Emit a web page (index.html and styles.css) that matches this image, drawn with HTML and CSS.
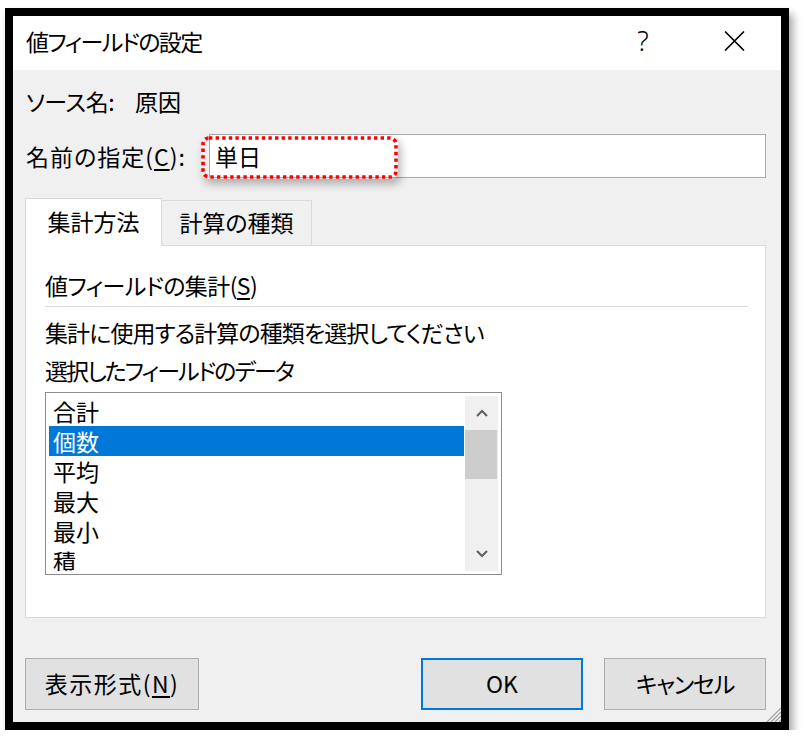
FILE: index.html
```html
<!DOCTYPE html>
<html lang="ja">
<head>
<meta charset="utf-8">
<title>値フィールドの設定</title>
<link rel="stylesheet" href="styles.css">
</head>
<body>
<div class="page">
  <div class="dialog">
    <div class="titlebar">
      <div class="title">値フィールドの設定</div>
      <div class="tb-help">?</div>
      <div class="tb-close">
        <svg width="21" height="20" viewBox="0 0 21 20"><path d="M1 0.5 L20 19.5 M20 0.5 L1 19.5" stroke="#000" stroke-width="1.6" fill="none"/></svg>
      </div>
    </div>
    <div class="body">
      <div class="row source">
        <span class="source-label">ソース名:</span>
        <span>原因</span>
      </div>
      <div class="row name">
        <span class="name-label">名前の指定(<u>C</u>):</span>
        <div class="input">
          <span>単日</span>
          <div class="annot">
            <svg width="197" height="43" viewBox="0 0 197 43"><rect x="2" y="2" width="193" height="39" rx="6" ry="6" fill="none" stroke="#ff0000" stroke-width="3.6" stroke-dasharray="3.4 3.2"/></svg>
          </div>
        </div>
      </div>
      <div class="tabs">
        <div class="tab active">集計方法</div>
        <div class="tab">計算の種類</div>
      </div>
      <div class="panel">
        <div class="heading">値フィールドの集計(<u>S</u>)</div>
        <div class="sep"></div>
        <div class="text t1">集計に使用する計算の種類を選択してください</div>
        <div class="text t2">選択したフィールドのデータ</div>
        <div class="listbox">
          <div class="items">
            <div class="item">合計</div>
            <div class="item selected">個数</div>
            <div class="item">平均</div>
            <div class="item">最大</div>
            <div class="item">最小</div>
            <div class="item">積</div>
          </div>
          <div class="scrollbar">
            <div class="sb-btn">
              <svg width="12" height="8" viewBox="0 0 12 8"><polyline points="1,7 6,2 11,7" fill="none" stroke="#606060" stroke-width="2"/></svg>
            </div>
            <div class="sb-thumb"></div>
            <div class="sb-track"></div>
            <div class="sb-btn">
              <svg width="12" height="8" viewBox="0 0 12 8"><polyline points="1,1 6,6 11,1" fill="none" stroke="#606060" stroke-width="2"/></svg>
            </div>
          </div>
        </div>
      </div>
      <div class="footer">
        <div class="btn btn-format">表示形式(<u>N</u>)</div>
        <div class="spacer"></div>
        <div class="btn btn-ok">OK</div>
        <div class="btn btn-cancel">キャンセル</div>
      </div>
    </div>
    <div class="grip">
      <svg width="16" height="16" viewBox="0 0 16 16"><path d="M16 2 L2 16 M16 6 L6 16 M16 10 L10 16 M16 14 L14 16" stroke="#a0a0a0" stroke-width="1.2" fill="none"/></svg>
    </div>
  </div>
</div>
</body>
</html>
```

FILE: styles.css
```css
* { box-sizing: border-box; }
html, body { margin: 0; padding: 0; background: #fff; }
body {
  font-family: "Noto Sans CJK JP", "Noto Sans", sans-serif;
  font-feature-settings: "palt";
  font-size: 23px;
  color: #000;
}
u { text-decoration-thickness: 2px; text-underline-offset: 3px; }
.page { padding: 8px 0 0 5px; }
.dialog {
  position: relative;
  width: 784px;
  height: 722px;
  border: 8px solid #000;
  box-shadow: 4px 6px 8px rgba(0,0,0,0.35);
  display: flex;
  flex-direction: column;
  background: #f0f0f0;
}
.titlebar {
  height: 54px;
  background: #fff;
  display: flex;
  align-items: center;
  padding-left: 13px;
}
.title { flex: 1; line-height: 1; padding-bottom: 4px; letter-spacing: -1.6px; }
.tb-help {
  width: 46px;
  margin-right: 22px;
  text-align: center;
  line-height: 1;
  padding-bottom: 6px;
  font-family: "Noto Sans", sans-serif;
  font-size: 27px;
  font-weight: 300;
}
.tb-close { width: 93px; display: flex; justify-content: center; padding-bottom: 5px; }
.tb-close svg { display: block; }
.body {
  flex: 1;
  display: flex;
  flex-direction: column;
  padding: 16px 15px 0 12px;
}
.row { display: flex; align-items: center; padding-left: 1px; }
.source { height: 30px; }
.source-label { width: 109px; letter-spacing: -0.5px; }
.name { margin-top: 18px; height: 44px; }
.name-label { width: 183px; letter-spacing: 1px; }
.input {
  position: relative;
  flex: 1;
  height: 44px;
  background: #fff;
  border: 1px solid #ababab;
  display: flex;
  align-items: center;
  padding-left: 5px;
}
.annot {
  position: absolute;
  left: -9px;
  top: 1px;
  width: 197px;
  height: 43px;
  border-radius: 7px;
  box-shadow: 3px 5px 9px rgba(0,0,0,0.28);
}
.annot svg { display: block; }
.tabs {
  margin-top: 20px;
  display: flex;
  align-items: flex-end;
  margin-bottom: -1px;
  position: relative;
  z-index: 1;
}
.tab {
  height: 46px;
  display: flex;
  align-items: center;
  justify-content: center;
  border: 1px solid #d9d9d9;
  border-left: none;
  background: #f0f0f0;
  width: 150px;
  padding-bottom: 2px;
}
.tab.active {
  width: 137px;
  height: 48px;
  background: #fff;
  border-left: 1px solid #d9d9d9;
  border-bottom: none;
  padding-bottom: 3px;
}
.panel {
  background: #fff;
  border: 1px solid #d9d9d9;
  padding: 24px 17px 40px 19px;
  height: 373px;
}
.heading { height: 30px; line-height: 30px; letter-spacing: -0.6px; }
.sep { margin-top: 6px; height: 1px; background: #dadada; }
.text { height: 30px; line-height: 30px; letter-spacing: -0.9px; }
.t1 { margin-top: 10px; }
.t2 { margin-top: 8px; letter-spacing: -1.9px; }
.listbox {
  margin-top: 7px;
  width: 457px;
  height: 183px;
  border: 1px solid #8c8c8c;
  padding: 3px;
  display: flex;
}
.items { flex: 1; overflow: hidden; }
.item { height: 30px; line-height: 30px; padding-left: 4px; }
.item.selected { background: #0078d7; color: #fff; }
.scrollbar {
  width: 33px;
  margin-left: 1px;
  background: #f0f0f0;
  display: flex;
  flex-direction: column;
}
.sb-btn { height: 34px; display: flex; align-items: center; justify-content: center; }
.sb-btn svg { display: block; }
.sb-thumb { height: 49px; background: #cdcdcd; margin: 0 1px 0 0; }
.sb-track { flex: 1; }
.footer {
  margin-top: 40px;
  display: flex;
}
.btn {
  height: 52px;
  background: #e1e1e1;
  border: 1px solid #adadad;
  display: flex;
  align-items: center;
  justify-content: center;
  padding-bottom: 2px;
}
.btn-format { width: 174px; letter-spacing: 1.5px; }
.spacer { flex: 1; }
.btn-ok { width: 162px; border: 2px solid #0078d7; }
.btn-cancel { width: 162px; margin-left: 21px; letter-spacing: -1.2px; }
.grip {
  position: absolute;
  right: 0;
  bottom: 0;
  width: 16px;
  height: 16px;
}
.grip svg { display: block; }
```
